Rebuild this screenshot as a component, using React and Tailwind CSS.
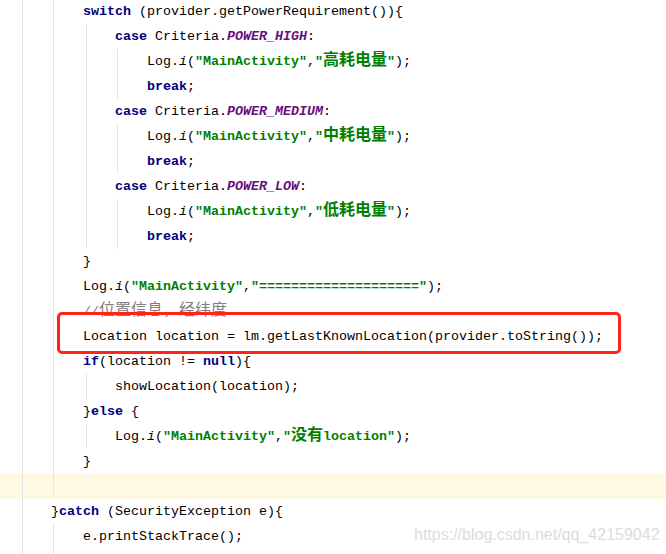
const mono = "font-['Liberation_Mono','Noto_Sans_CJK_SC',monospace]";

function K({ children }) {
  return <span className="font-bold text-[#000080]">{children}</span>;
}

function S({ children }) {
  return <span className="font-bold text-[#008000]">{children}</span>;
}

function C({ children }) {
  return <span className="font-bold italic text-[#660e7a]">{children}</span>;
}

function Cjk({ children }) {
  return <span className="font-['Noto_Sans_CJK_SC',sans-serif] text-[16px] leading-[0]">{children}</span>;
}

function Line({ indent = 0, hl = false, children }) {
  return (
    <div className={`h-[25px] leading-[25px] whitespace-pre pl-[19px] ${hl ? "bg-[#fef9e3]" : ""}`}>
      {" ".repeat(indent)}
      {children}
    </div>
  );
}

function LogLine({ indent, msg }) {
  return (
    <Line indent={indent}>
      Log.<span className="italic">i</span>(<S>"MainActivity"</S>,<S>{msg}</S>);
    </Line>
  );
}

// indent guides: [left, top, height]
const guides = [
  [22, 0, 554],
  [53, 0, 498],
  [53, 523, 31],
  [86, 24, 225],
  [86, 374, 25],
  [86, 424, 25],
  [117, 49, 50],
  [117, 124, 50],
  [117, 199, 50],
];

export default function App() {
  return (
    <div className="relative w-[666px] h-[554px] overflow-hidden bg-white">
      <div className={`-mt-px text-[13.33px] text-black ${mono}`}>
        <Line indent={8}>
          <K>switch</K> (provider.getPowerRequirement()){"{"}
        </Line>
        <Line indent={12}>
          <K>case</K> Criteria.<C>POWER_HIGH</C>:
        </Line>
        <LogLine indent={16} msg={<>"<Cjk>高耗电量</Cjk>"</>} />
        <Line indent={16}>
          <K>break</K>;
        </Line>
        <Line indent={12}>
          <K>case</K> Criteria.<C>POWER_MEDIUM</C>:
        </Line>
        <LogLine indent={16} msg={<>"<Cjk>中耗电量</Cjk>"</>} />
        <Line indent={16}>
          <K>break</K>;
        </Line>
        <Line indent={12}>
          <K>case</K> Criteria.<C>POWER_LOW</C>:
        </Line>
        <LogLine indent={16} msg={<>"<Cjk>低耗电量</Cjk>"</>} />
        <Line indent={16}>
          <K>break</K>;
        </Line>
        <Line indent={8}>{"}"}</Line>
        <LogLine indent={8} msg={'"===================="'} />
        <Line indent={8}>
          <span className="text-[#808080]">
            //<Cjk>位置信息，经纬度</Cjk>
          </span>
        </Line>
        <Line indent={8}>Location location = lm.getLastKnownLocation(provider.toString());</Line>
        <Line indent={8}>
          <K>if</K>(location != <K>null</K>){"{"}
        </Line>
        <Line indent={12}>showLocation(location);</Line>
        <Line indent={8}>
          {"}"}
          <K>else</K> {"{"}
        </Line>
        <LogLine indent={12} msg={<>"<Cjk>没有</Cjk>location"</>} />
        <Line indent={8}>{"}"}</Line>
        <Line hl />
        <Line indent={4}>
          {"}"}
          <K>catch</K> (SecurityException e){"{"}
        </Line>
        <Line indent={8}>e.printStackTrace();</Line>
        <Line indent={4}>{"}"}</Line>
      </div>

      {guides.map(([left, top, height], i) => (
        <div
          key={i}
          className="absolute w-px bg-[#e4e4e4]"
          style={{ left, top, height }}
        />
      ))}

      <div className="absolute left-[57px] top-[312px] w-[564px] h-[42px] rounded-[5px] border-[3px] border-[#ff2419]" />

      <div className="absolute left-[414px] top-[524px] font-['Liberation_Sans',Arial,sans-serif] text-[16px] leading-[22px] text-[#dcdcdc]">
        https://blog.csdn.net/qq_42159042
      </div>
    </div>
  );
}
